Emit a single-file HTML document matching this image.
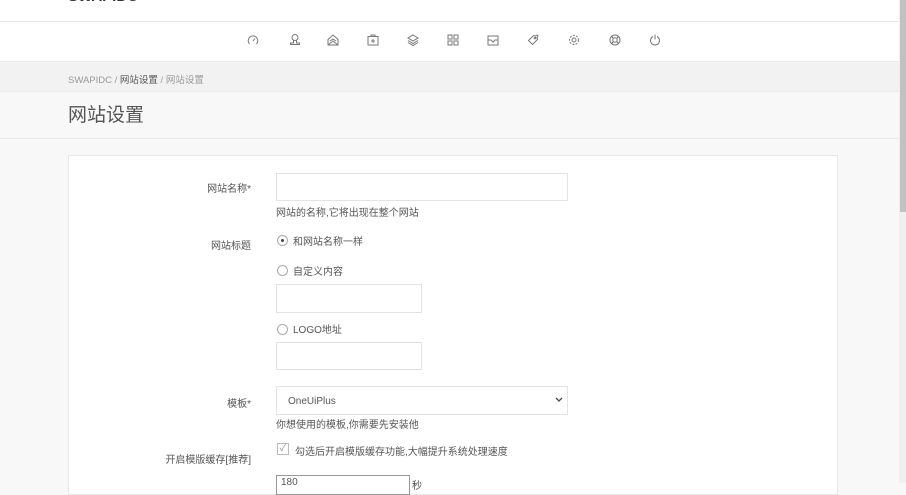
<!DOCTYPE html>
<html><head><meta charset="utf-8"><style>
*{box-sizing:border-box;margin:0;padding:0}
body{width:906px;height:483px;overflow:hidden;background:#f8f8f8;font-family:"Liberation Sans","Noto Sans CJK SC",sans-serif;color:#555;font-size:10px;position:relative}
.a{position:absolute}
.inp{position:absolute;border:1px solid #e3e3e3;background:#fff}
.lbl{position:absolute;right:655px;text-align:right;font-size:10px;color:#555}
.radio{position:absolute;width:11px;height:11px;border:1px solid #aaa;border-radius:50%;background:#fff}
svg{position:absolute;stroke:#777;fill:none;stroke-width:1}
</style></head><body>
<div class="a" style="left:0;top:0;width:899px;height:22px;background:#fff;border-bottom:1px solid #e6e6e6"></div>
<div class="a" style="left:68px;top:-12px;font-size:15px;font-weight:bold;color:#333">SWAPIDC</div>
<div class="a" style="left:0;top:22px;width:899px;height:40px;background:#fff;border-bottom:1px solid #e8e8e8"></div>
<svg style="left:246px;top:33px" width="14" height="14"><path d="M3.5 11A4.8 4.8 0 1 1 10.5 11M7 8l2-2.5"/></svg>
<svg style="left:288px;top:33px" width="14" height="14"><circle cx="7" cy="4.5" r="3"/><path d="M5.5 7.5v2.5H2.5v1.5h9v-1.5H8.5V7.5"/></svg>
<svg style="left:326px;top:33px" width="14" height="14"><path d="M2 6.5l5-4.5 5 4.5v5.5H2zM2 12l5-4 5 4M4 8l3-2 3 2"/></svg>
<svg style="left:366px;top:33px" width="14" height="14"><rect x="2" y="3.5" width="10" height="8.5"/><path d="M5 3.5V2h4v1.5M7 6v4M5 8h4"/></svg>
<svg style="left:406px;top:33px" width="14" height="14"><path d="M7 2l5 3-5 3-5-3zM2 7.5l5 3 5-3M2 9.5l5 3 5-3"/></svg>
<svg style="left:446px;top:33px" width="14" height="14"><rect x="2" y="2" width="4" height="4"/><rect x="8" y="2" width="4" height="4"/><rect x="2" y="8" width="4" height="4"/><rect x="8" y="8" width="4" height="4"/></svg>
<svg style="left:486px;top:33px" width="14" height="14"><rect x="2" y="3" width="10" height="9"/><path d="M2 7h3l2 2 2-2h3"/></svg>
<svg style="left:526px;top:33px" width="14" height="14"><path d="M2.5 7.5l5-5 2 0.5 1.5-1 1 1-1 1.5 0.5 2-5 5z"/><circle cx="9" cy="5" r="0.8"/></svg>
<svg style="left:567px;top:33px" width="14" height="14"><circle cx="7" cy="7" r="2"/><circle cx="7" cy="7" r="4.5" stroke-dasharray="2 1.3"/></svg>
<svg style="left:608px;top:33px" width="14" height="14"><circle cx="7" cy="7" r="5"/><circle cx="7" cy="7" r="2.2"/><path d="M3.5 3.5l2 2M10.5 3.5l-2 2M3.5 10.5l2-2M10.5 10.5l-2-2"/></svg>
<svg style="left:648px;top:33px" width="14" height="14"><path d="M5 3.5A4.5 4.5 0 1 0 9 3.5M7 1.5v5"/></svg>
<div class="a" style="left:0;top:63px;width:899px;height:29px;background:#f2f2f2;border-bottom:1px solid #ebebeb"></div>
<div class="a" style="left:68px;top:72px;font-size:9.5px;color:#999">SWAPIDC / <span style="color:#555">网站设置</span> / 网站设置</div>
<div class="a" style="left:0;top:138px;width:899px;height:1px;background:#e8e8e8"></div>
<div class="a" style="left:68px;top:100px;font-size:19px;color:#555">网站设置</div>
<div class="a" style="left:68px;top:155px;width:770px;height:340px;background:#fff;border:1px solid #e8e8e8"></div>
<div class="lbl" style="top:180px">网站名称*</div>
<div class="inp" style="left:276px;top:173px;width:292px;height:28px"></div>
<div class="a" style="left:276px;top:204px">网站的名称,它将出现在整个网站</div>
<div class="lbl" style="top:237px">网站标题</div>
<div class="radio" style="left:277px;top:235px"><div style="position:absolute;left:3px;top:3px;width:3px;height:3px;border-radius:50%;background:#444"></div></div>
<div class="a" style="left:293px;top:233px">和网站名称一样</div>
<div class="radio" style="left:277px;top:265px"></div>
<div class="a" style="left:293px;top:263px">自定义内容</div>
<div class="inp" style="left:276px;top:284px;width:146px;height:29px"></div>
<div class="radio" style="left:277px;top:324px"></div>
<div class="a" style="left:293px;top:321px">LOGO地址</div>
<div class="inp" style="left:276px;top:342px;width:146px;height:28px"></div>
<div class="lbl" style="top:395px">模板*</div>
<div class="inp" style="left:276px;top:386px;width:292px;height:29px"></div>
<div class="a" style="left:288px;top:396px;color:#555">OneUiPlus</div>
<svg style="left:554px;top:396px" width="10" height="8"><path d="M2 2l3 3 3-3" stroke="#444" stroke-width="1.3"/></svg>
<div class="a" style="left:276px;top:416px">你想使用的模板,你需要先安装他</div>
<div class="lbl" style="top:451px">开启模版缓存[推荐]</div>
<div class="a" style="left:277px;top:443px;width:12px;height:12px;border:1px solid #bbb;color:#999;font-size:10px;line-height:10px;text-align:center">✓</div>
<div class="a" style="left:295px;top:443px">勾选后开启模版缓存功能,大幅提升系统处理速度</div>
<div class="inp" style="left:276px;top:475px;width:134px;height:20px;border-color:#999"></div>
<div class="a" style="left:281px;top:477px">180</div>
<div class="a" style="left:412px;top:477px">秒</div>
<div class="a" style="left:899px;top:0;width:7px;height:483px;background:#f0f0f0"></div>
<div class="a" style="left:900px;top:0;width:6px;height:212px;background:#c1c1c1"></div>
</body></html>
